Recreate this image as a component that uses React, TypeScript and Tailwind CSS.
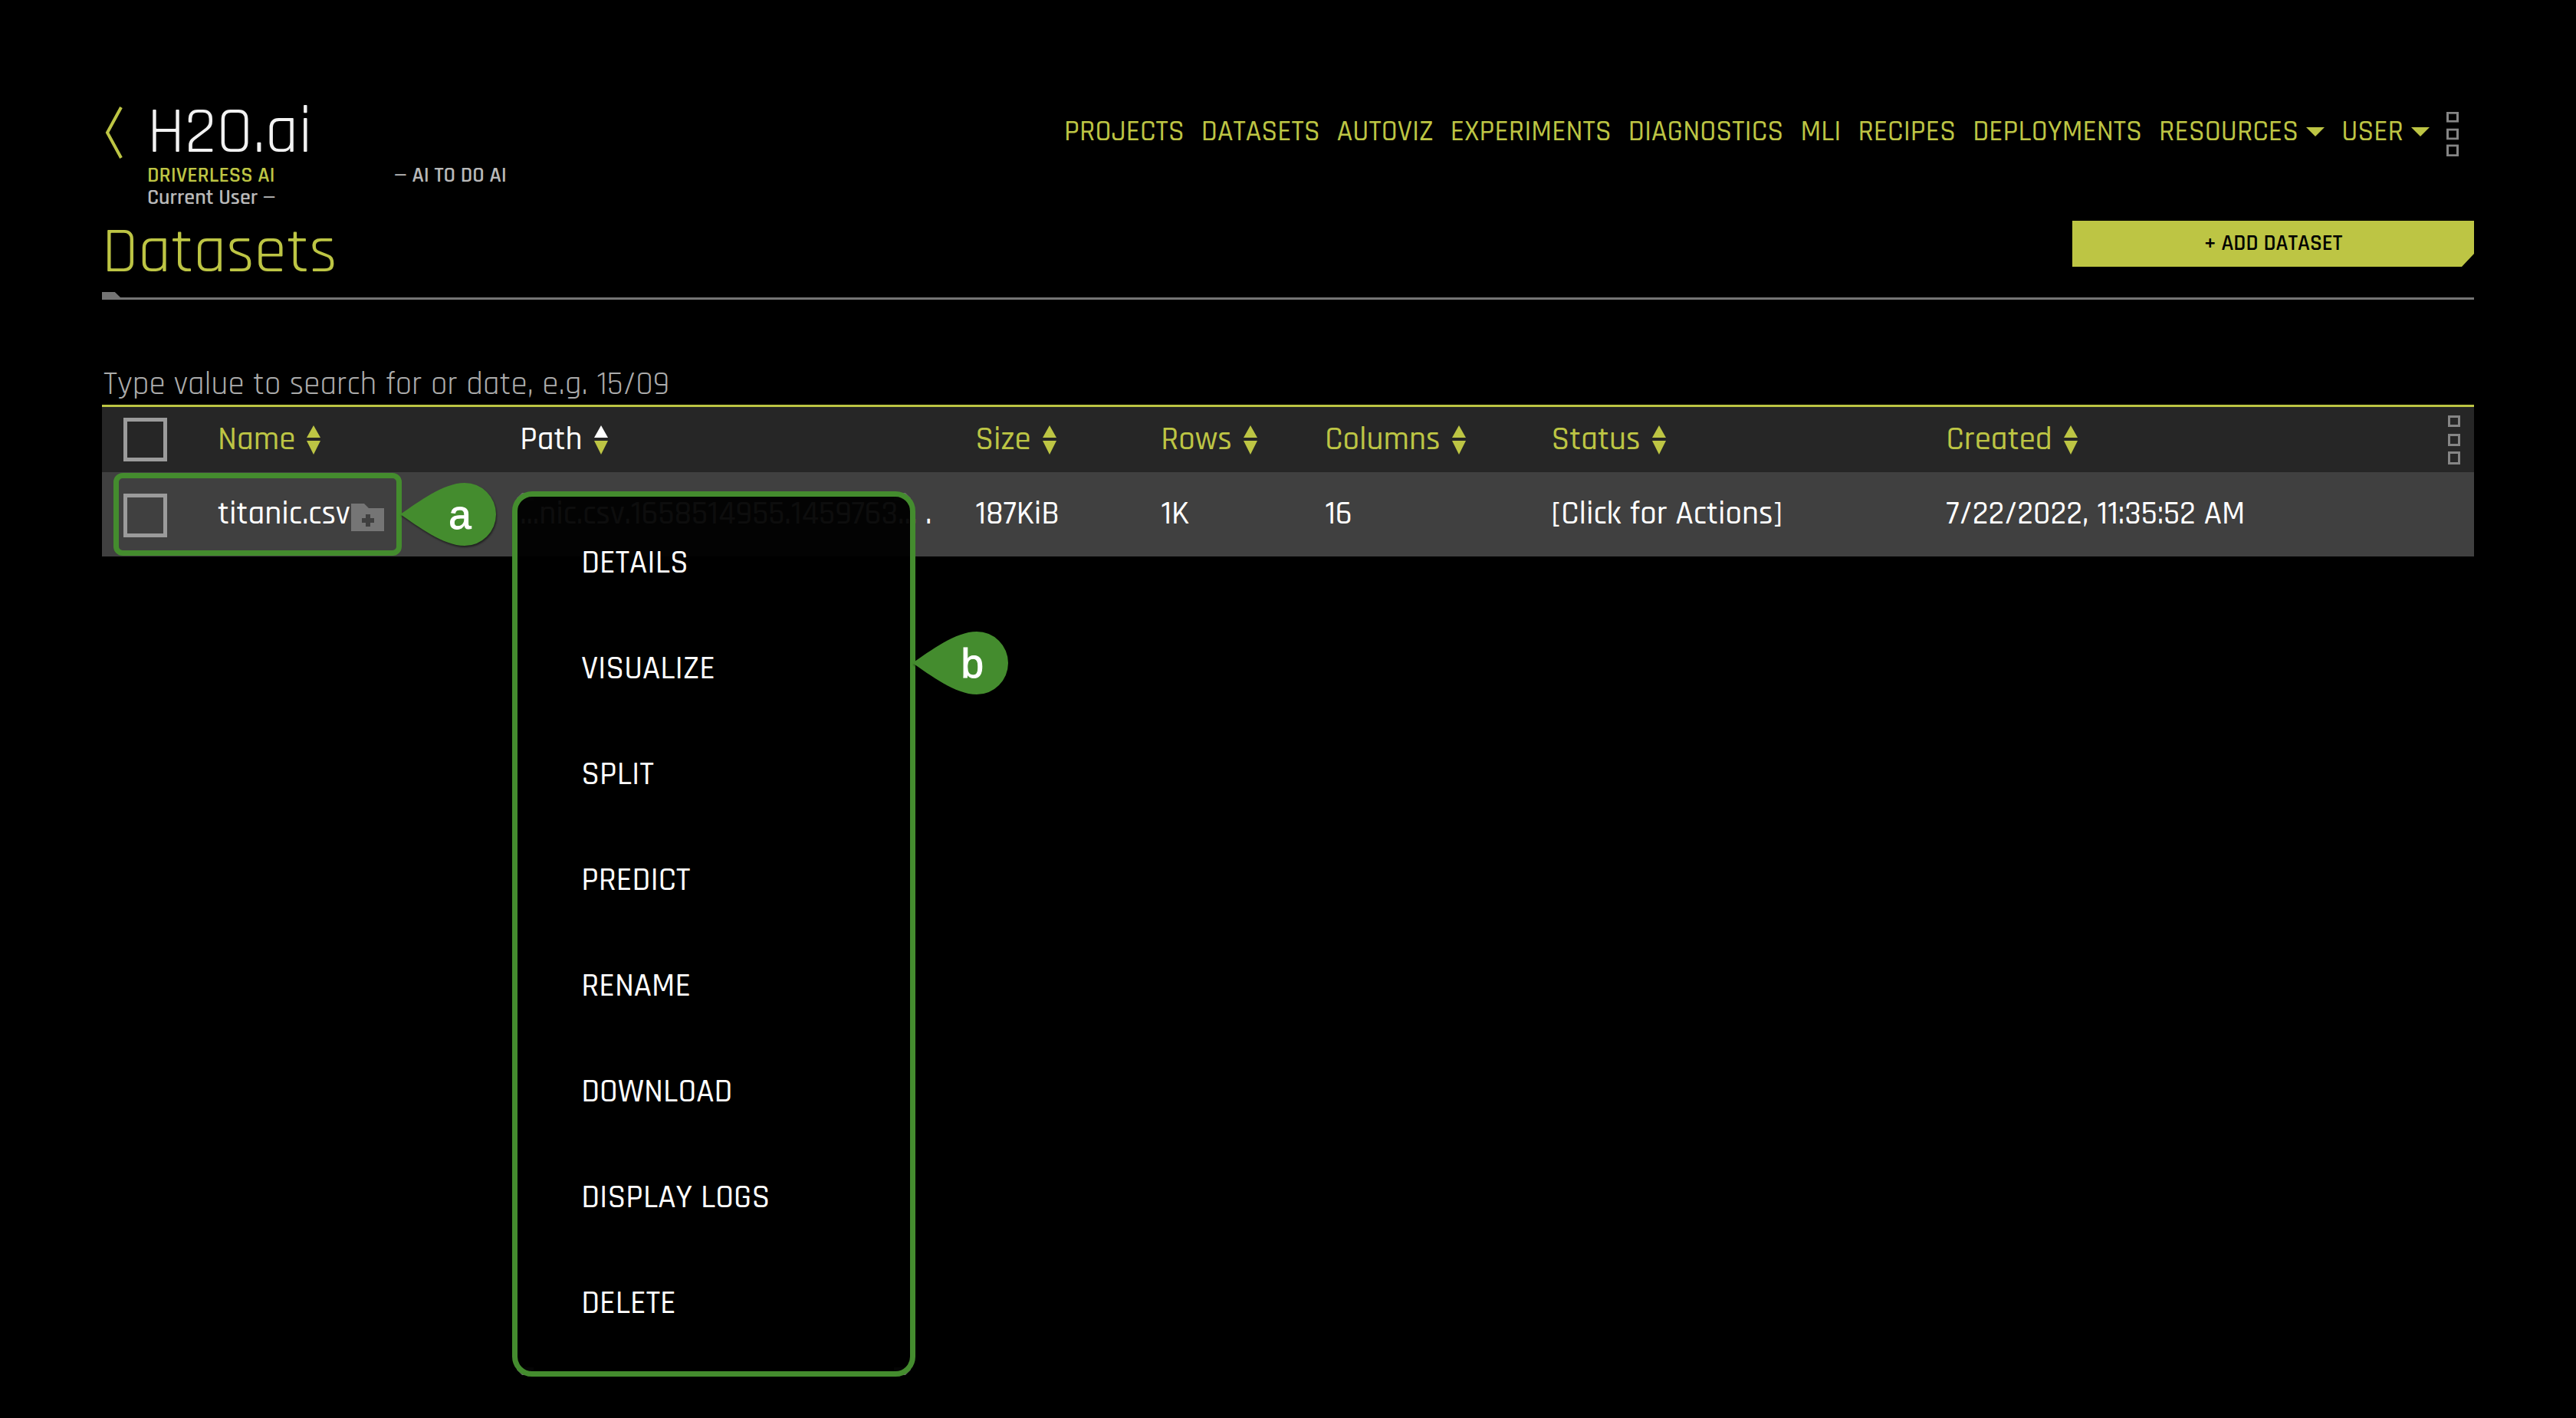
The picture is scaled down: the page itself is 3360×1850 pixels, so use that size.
import type { ReactNode } from "react";

const navLinks = [
  "PROJECTS",
  "DATASETS",
  "AUTOVIZ",
  "EXPERIMENTS",
  "DIAGNOSTICS",
  "MLI",
  "RECIPES",
  "DEPLOYMENTS",
];

const columns = [
  { label: "Name", width: "w-[12.74%]" },
  { label: "Path", width: "w-[19.2%]", active: true },
  { label: "Size", width: "w-[7.82%]" },
  { label: "Rows", width: "w-[6.92%]" },
  { label: "Columns", width: "w-[9.54%]" },
  { label: "Status", width: "w-[16.65%]" },
  { label: "Created", width: "", kebab: true },
];

const actions = [
  "DETAILS",
  "VISUALIZE",
  "SPLIT",
  "PREDICT",
  "RENAME",
  "DOWNLOAD",
  "DISPLAY LOGS",
  "DELETE",
];

function Kebab({ className }: { className: string }) {
  return (
    <svg viewBox="0 0 16 64" preserveAspectRatio="none" className={`w-4 shrink-0 ${className}`} fill="none" stroke="#858585" strokeWidth="3" aria-hidden="true">
      <rect x="1.5" y="1.5" width="13" height="12" />
      <rect x="1.5" y="25.5" width="13" height="13" />
      <rect x="1.5" y="48.5" width="13" height="14" />
    </svg>
  );
}

function SortIcon({ active }: { active?: boolean }) {
  return (
    <svg viewBox="0 0 18 38" className="h-[38px] w-[18px]" aria-hidden="true">
      <path d="M9 0 18 16H0z" fill={active ? "#ffffff" : "#bdc544"} />
      <path d="M0 20h18L9 38z" fill="#bdc544" />
    </svg>
  );
}

function NavMenuButton({ children }: { children: ReactNode }) {
  return (
    <button type="button" className="flex items-center gap-[10px]">
      {children}
      <svg viewBox="0 0 24 12" className="h-3 w-6" aria-hidden="true">
        <path d="M0 0h24L12 12z" fill="#bdc544" />
      </svg>
    </button>
  );
}

function Checkbox({ label }: { label: string }) {
  return (
    <input
      type="checkbox"
      aria-label={label}
      className="block size-[57px] appearance-none border-[5px] border-[#9b9b9b]"
    />
  );
}

function Marker({ letter }: { letter: string }) {
  return (
    <span className="relative flex h-[84px] w-[126px] items-center justify-center pl-[30px] font-['Liberation_Sans',sans-serif] text-[53px] leading-none font-normal text-white [-webkit-text-stroke:1px_white]">
      <svg viewBox="0 0 126 84" className="absolute inset-0 size-full drop-shadow-[1px_2px_1px_rgba(0,0,0,0.5)]" aria-hidden="true">
        <path d="M0 42 C24 26 56 1 84 1 A41 41 0 0 1 84 83 C56 83 24 58 0 42z" fill="#448c2e" />
      </svg>
      <span className="relative">{letter}</span>
    </span>
  );
}

function Corner({ place }: { place: string }) {
  return (
    <svg viewBox="0 0 22 10" className={`absolute h-[10px] w-[22px] ${place}`} aria-hidden="true">
      <path d="M7 0H22V10H0V7z" fill="#6b6b6b" />
    </svg>
  );
}

export default function App() {
  return (
    <div className="min-h-screen bg-black px-[133px] pt-[131px] font-['Rajdhani','Roboto_Condensed',sans-serif] font-medium text-white">
      <header className="flex items-start justify-between">
        <div className="flex">
          <button type="button" aria-label="Back" className="mt-2 ml-[3px] h-[68px] w-6">
            <svg viewBox="0 0 24 68" className="size-full" fill="none" stroke="#bdc544" strokeWidth="4" aria-hidden="true">
              <path d="M22 1 4 34 22 67" />
            </svg>
          </button>
          <div className="ml-8">
            <p className="text-[86px] leading-[84px] font-normal text-[#f2f2f2]">H2O.ai</p>
            <div className="flex text-[28px] leading-[29px] font-semibold text-[#b9b9b9]">
              <p className="w-[322px]">
                <span className="block text-[#bdc544]">DRIVERLESS AI</span>
                Current User —
              </p>
              <p>— AI TO DO AI</p>
            </div>
          </div>
        </div>
        <nav className="mr-5 flex items-start gap-[22px] pt-[15px]">
          <ul className="flex gap-[22px] text-[38px] leading-[52px] text-[#bdc544]">
            {navLinks.map((item) => (
              <li key={item}>
                <a href="#">{item}</a>
              </li>
            ))}
            <li>
              <NavMenuButton>RESOURCES</NavMenuButton>
            </li>
            <li>
              <NavMenuButton>USER</NavMenuButton>
            </li>
          </ul>
          <button type="button" aria-label="More">
            <Kebab className="h-[58px]" />
          </button>
        </nav>
      </header>

      <div className="mt-[15px] flex items-start justify-between">
        <h1 className="text-[85px] leading-[82px] font-normal text-[#bdc544]">Datasets</h1>
        <button
          type="button"
          className="h-[60px] w-[524px] bg-[#bdc544] text-[29px] font-semibold text-black [clip-path:polygon(0_0,100%_0,100%_43px,calc(100%-16px)_100%,0_100%)]"
        >
          + ADD DATASET
        </button>
      </div>
      <div className="mt-[11px] h-[10px] border-b-[3px] border-[#757575]">
        <div className="h-[7px] w-6 bg-[#757575] [clip-path:polygon(0_0,70%_0,100%_100%,0_100%)]" />
      </div>

      <input
        type="search"
        aria-label="Search datasets"
        placeholder="Type value to search for or date, e.g. 15/09"
        className="mt-[86px] block h-[54px] w-full border-b-[3px] border-[#bdc544] bg-transparent px-[2px] pb-[2px] text-[43px] leading-[50px] font-normal placeholder:text-[#acacac] placeholder:opacity-100"
      />

      <table className="w-full table-fixed text-left text-[43px] leading-[52px]">
        <thead>
          <tr className="h-[85px] bg-[#262626] text-[#bdc544]">
            <th className="w-[4.88%] pl-7">
              <Checkbox label="Select all datasets" />
            </th>
            {columns.map((c) => (
              <th key={c.label} className={`font-medium ${c.width}`}>
                <div className="flex items-center justify-between pr-[18px]">
                  <button type="button" className={`flex items-center gap-[15px] ${c.active ? "text-white" : ""}`}>
                    {c.label}
                    <SortIcon active={c.active} />
                  </button>
                  {c.kebab && (
                    <button type="button" aria-label="Column options">
                      <Kebab className="h-16" />
                    </button>
                  )}
                </div>
              </th>
            ))}
          </tr>
        </thead>
        <tbody>
          <tr className="h-[110px] bg-[#404040]">
            <td className="relative pt-[2px] pl-7">
              <Checkbox label="Select titanic.csv" />
              <div className="absolute top-px left-[15px] flex items-center">
                <div className="h-[108px] w-[376px] shrink-0 rounded-xl border-[7px] border-[#448c2e]" />
                <div className="-ml-[2px] shrink-0">
                  <Marker letter="a" />
                </div>
              </div>
            </td>
            <td>
              <div className="flex items-center gap-px">
                titanic.csv
                <svg viewBox="0 0 43 36" className="mt-2 h-9 w-[43px]" aria-hidden="true">
                  <path d="M0 0H17L23 6H43V36H0z" fill="#757575" />
                  <path d="M22 14V30M14 22H30" stroke="#404040" strokeWidth="6" />
                </svg>
              </div>
            </td>
            <td className="relative whitespace-nowrap">
              ...nic.csv.1658514955.1459763... .
              <div className="absolute top-[25px] -left-[10px] flex">
                <div className="relative w-[526px]">
                  <Corner place="top-[2px] left-[6px]" />
                  <Corner place="top-[2px] right-[6px] -scale-x-100" />
                  <Corner place="bottom-[2px] left-[6px] -scale-y-100" />
                  <Corner place="bottom-[2px] right-[6px] -scale-100" />
                  <ul className="relative rounded-[26px] border-[7px] border-[#448c2e] bg-black/95 pt-[18px] pb-[19px]">
                    {actions.map((a) => (
                      <li key={a}>
                        <button type="button" className="block h-[138px] w-full pl-[83px] text-left">
                          {a}
                        </button>
                      </li>
                    ))}
                  </ul>
                </div>
                <div className="mt-[182px] -ml-1">
                  <Marker letter="b" />
                </div>
              </div>
            </td>
            <td>187KiB</td>
            <td>1K</td>
            <td>16</td>
            <td>
              <button type="button">[Click for Actions]</button>
            </td>
            <td>7/22/2022, 11:35:52 AM</td>
          </tr>
        </tbody>
      </table>
    </div>
  );
}
